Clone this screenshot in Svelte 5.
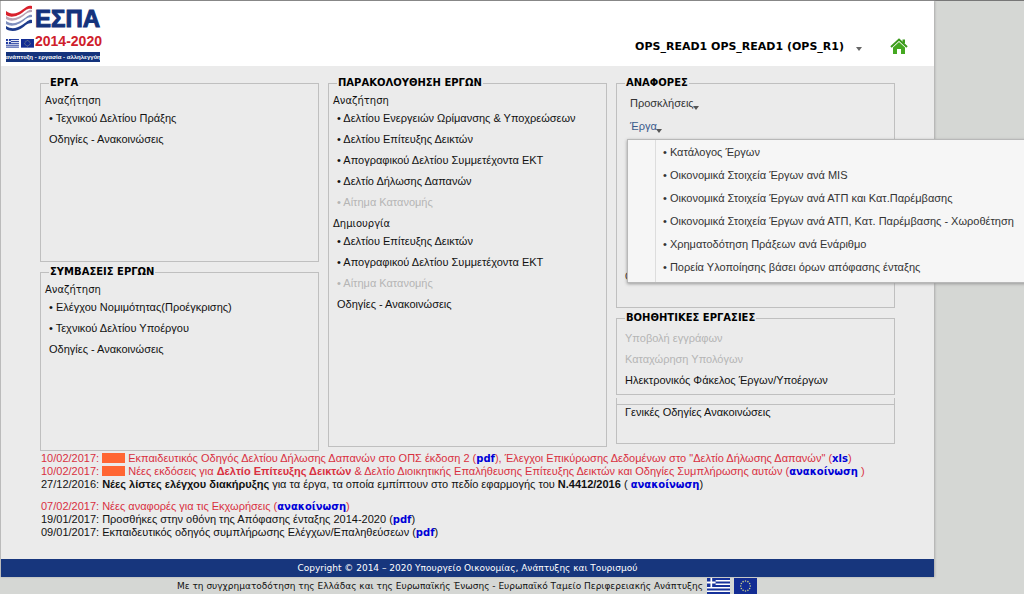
<script>
    const contracts = ["Ελέγχου Νομιμότητας(Προέγκρισης)", "Τεχνικού Δελτίου Υποέργου"];

    const searchItems = [
        { label: "Δελτίου Ενεργειών Ωρίμανσης & Υποχρεώσεων" },
        { label: "Δελτίου Επίτευξης Δεικτών" },
        { label: "Απογραφικού Δελτίου Συμμετέχοντα ΕΚΤ" },
        { label: "Δελτίο Δήλωσης Δαπανών" },
        { label: "Αίτημα Κατανομής", disabled: true }
    ];

    const createItems = [
        { label: "Δελτίου Επίτευξης Δεικτών" },
        { label: "Απογραφικού Δελτίου Συμμετέχοντα ΕΚΤ" },
        { label: "Αίτημα Κατανομής", disabled: true }
    ];

    const reports = [
        "Κατάλογος Έργων",
        "Οικονομικά Στοιχεία Έργων ανά MIS",
        "Οικονομικά Στοιχεία Έργων ανά ΑΤΠ και Κατ.Παρέμβασης",
        "Οικονομικά Στοιχεία Έργων ανά ΑΤΠ, Κατ. Παρέμβασης - Χωροθέτηση",
        "Χρηματοδότηση Πράξεων ανά Ενάριθμο",
        "Πορεία Υλοποίησης βάσει όρων απόφασης ένταξης"
    ];

    // Twelve stars on the EU flag
    const stars = Array.from({ length: 12 }, (_, i) => ({
        x: 12 + 5 * Math.sin((i * Math.PI) / 6),
        y: 8 - 5 * Math.cos((i * Math.PI) / 6)
    }));

    let reportsOpen = true;

    function toggleReports() {
        reportsOpen = !reportsOpen;
    }
</script>

{#snippet greekFlag()}
    <rect width="24" height="16" fill="#fff" />
    <path d="M0 1h24M0 4.5h24M0 8h24M0 11.5h24M0 15h24" stroke="#16329a" stroke-width="1.8" />
    <path d="M0 0h9v9H0z" fill="#16329a" />
    <path d="M4.5 0v9M0 4.5h9" stroke="#fff" stroke-width="1.8" />
{/snippet}

{#snippet euFlag()}
    <rect width="24" height="16" fill="#122c93" />
    {#each stars as star}
        <circle cx={star.x} cy={star.y} r="0.8" fill="#c9cf8a" />
    {/each}
{/snippet}

<div class="page">
    <header>
        <svg class="logo" width="96" height="58" viewBox="0 0 96 58" role="img" aria-label="ΕΣΠΑ 2014-2020">
            <path d="M0 6C6 10 11 9 16 5S23 0 26 1V4C21 3 19 6 16 8S6 14 0 10z" fill="#d9202b" />
            <path d="M0 11C6 15 11 13 16 10S23 4 26 5V7C21 7 19 10 16 12S6 18 0 14z" fill="#b9a3b4" />
            <path d="M0 16C6 20 11 18 16 15S23 9 26 10V12C21 12 19 15 16 17S6 23 0 19z" fill="#7f8fbd" />
            <path d="M0 21C6 25 11 23 16 20S23 14 26 15V18C21 18 19 21 16 23S6 28 0 24z" fill="#1d3b8b" />
            <text x="29" y="22" class="logo-name">ΕΣΠΑ</text>
            <text x="29" y="41" class="logo-years">2014-2020</text>
            <g transform="translate(0 34) scale(.54)">{@render greekFlag()}</g>
            <g transform="translate(15 34) scale(.54)">{@render euFlag()}</g>
            <rect y="47" width="94" height="10" fill="#14337c" />
            <text x="47" y="54" text-anchor="middle" class="logo-motto">ανάπτυξη - εργασία - αλληλεγγύη</text>
        </svg>
        <button class="user">
            OPS_READ1 OPS_READ1 (OPS_R1)
            <svg width="6" height="5" viewBox="0 0 6 5"><path d="M0 1h6L3 5z" fill="#666" /></svg>
        </button>
        <a class="home" href="#home" aria-label="Αρχική">
            <svg width="18" height="17" viewBox="0 0 18 17">
                <path d="M12.500 1.500h2.500v4h-2.500z" fill="#3c9a1c" />
                <path d="M3 9.500 9 4l6 5.500V16h-4v-5H7v5H3z" fill="#45a821" />
                <path d="M1 9 9 1.500 17 9" fill="none" stroke="#3c9a1c" stroke-width="2" />
            </svg>
        </a>
    </header>

    <main>
        <div class="columns">
            <div class="column">
                <fieldset class="half">
                    <legend>ΕΡΓΑ</legend>
                    <h3>Αναζήτηση</h3>
                    <a class="item" href="#deltio">• Τεχνικού Δελτίου Πράξης</a>
                    <a class="item" href="#help">Οδηγίες - Ανακοινώσεις</a>
                </fieldset>
                <fieldset class="half">
                    <legend>ΣΥΜΒΑΣΕΙΣ ΕΡΓΩΝ</legend>
                    <h3>Αναζήτηση</h3>
                    {#each contracts as label}
                        <a class="item" href="#contract">• {label}</a>
                    {/each}
                    <a class="item" href="#help">Οδηγίες - Ανακοινώσεις</a>
                </fieldset>
            </div>

            <div class="column">
                <fieldset class="tall">
                    <legend>ΠΑΡΑΚΟΛΟΥΘΗΣΗ ΕΡΓΩΝ</legend>
                    <h3>Αναζήτηση</h3>
                    {#each searchItems as item}
                        <a class="item" class:disabled={item.disabled} href="#search">• {item.label}</a>
                    {/each}
                    <h3>Δημιουργία</h3>
                    {#each createItems as item}
                        <a class="item" class:disabled={item.disabled} href="#create">• {item.label}</a>
                    {/each}
                    <a class="item" href="#help">Οδηγίες - Ανακοινώσεις</a>
                </fieldset>
            </div>

            <div class="column">
                <fieldset class="reports">
                    <legend>ΑΝΑΦΟΡΕΣ</legend>
                    <div class="report-body">
                        <button class="drop">
                            Προσκλήσεις<svg width="6" height="5" viewBox="0 0 6 5"><path d="M0 1h6L3 5z" fill="#555" /></svg>
                        </button>
                        <div class="drop-wrap">
                            <button class="drop open" on:click={toggleReports}>
                                Έργα<svg width="6" height="5" viewBox="0 0 6 5"><path d="M0 1h6L3 5z" fill="#555" /></svg>
                            </button>
                            {#if reportsOpen}
                                <div class="menu">
                                    {#each reports as report}
                                        <a href="#report">• {report}</a>
                                    {/each}
                                </div>
                            {/if}
                        </div>
                        <a class="item last" href="#help">Οδηγίες - Ανακοινώσεις</a>
                    </div>
                </fieldset>
                <fieldset class="tools">
                    <legend>ΒΟΗΘΗΤΙΚΕΣ ΕΡΓΑΣΙΕΣ</legend>
                    <a class="item disabled" href="#submit">Υποβολή εγγράφων</a>
                    <a class="item disabled" href="#register">Καταχώρηση Υπολόγων</a>
                    <a class="item" href="#folder">Ηλεκτρονικός Φάκελος Έργων/Υποέργων</a>
                </fieldset>
                <div class="general">
                    <a class="item" href="#general">Γενικές Οδηγίες Ανακοινώσεις</a>
                </div>
            </div>
        </div>

        <div class="news">
            <p class="red">10/02/2017: <span class="new"></span> Εκπαιδευτικός Οδηγός Δελτίου Δήλωσης Δαπανών στο ΟΠΣ έκδοση 2 (<a href="#pdf">pdf</a>), Έλεγχοι Επικύρωσης Δεδομένων στο "Δελτίο Δήλωσης Δαπανών" (<a href="#xls">xls</a>)</p>
            <p class="red">10/02/2017: <span class="new"></span> Νέες εκδόσεις για <b>Δελτίο Επίτευξης Δεικτών</b> & Δελτίο Διοικητικής Επαλήθευσης Επίτευξης Δεικτών και Οδηγίες Συμπλήρωσης αυτών (<a href="#ann">ανακοίνωση</a> )</p>
            <p>27/12/2016: <b>Νέες λίστες ελέγχου διακήρυξης</b> για τα έργα, τα οποία εμπίπτουν στο πεδίο εφαρμογής του <b>Ν.4412/2016</b> ( <a href="#ann">ανακοίνωση</a>)</p>
            <p class="red older">07/02/2017: Νέες αναφορές για τις Εκχωρήσεις (<a href="#ann">ανακοίνωση</a>)</p>
            <p>19/01/2017: Προσθήκες στην οθόνη της Απόφασης ένταξης 2014-2020 (<a href="#pdf">pdf</a>)</p>
            <p>09/01/2017: Εκπαιδευτικός οδηγός συμπλήρωσης Ελέγχων/Επαληθεύσεων (<a href="#pdf">pdf</a>)</p>
        </div>
    </main>

    <div class="copyright">Copyright © 2014 – 2020 Υπουργείο Οικονομίας, Ανάπτυξης και Τουρισμού</div>
</div>

<footer>
    <span>Με τη συγχρηματοδότηση της Ελλάδας και της Ευρωπαϊκής Ένωσης - Ευρωπαϊκό Ταμείο Περιφερειακής Ανάπτυξης</span>
    <svg width="23" height="16" viewBox="0 0 24 16" preserveAspectRatio="none">{@render greekFlag()}</svg>
    <svg width="23" height="16" viewBox="0 0 24 16" preserveAspectRatio="none">{@render euFlag()}</svg>
</footer>

<style>
    :global(body) {
        background: #d5d7d4;
        overflow-x: hidden;
        font: 11px/21px "Liberation Sans", Arial, sans-serif;
        color: #111;
    }

    :global(#app) {
        border-top: 1px solid #777;
    }

    .page {
        box-sizing: border-box;
        max-width: 934px;
        background: #ebebeb;
        border-left: 1px solid #bbb;
        box-shadow: 1px 0 2px #aaa;
    }

    header {
        display: flex;
        align-items: center;
        height: 65px;
        padding: 0 26px 0 5px;
        background: #fff;
    }

    .logo {
        margin-right: auto;
    }

    .logo-name {
        font: bold 24px "Liberation Sans", Arial, sans-serif;
        fill: #14337c;
        stroke: #14337c;
    }

    .logo-years {
        font: bold 14px "Liberation Sans", Arial, sans-serif;
        fill: #cf202b;
    }

    .logo-motto {
        font: bold 6px "Liberation Sans", Arial, sans-serif;
        fill: #fff;
    }

    button {
        padding: 0;
        border: 0;
        background: none;
        cursor: pointer;
    }

    .user {
        display: flex;
        align-items: center;
        gap: 12px;
        margin-top: 26px;
        font: bold 11px "DejaVu Sans", Verdana, sans-serif;
    }

    .user svg {
        margin-top: 4px;
    }

    .home {
        display: flex;
        margin: 26px 0 0 28px;
    }

    .columns {
        display: grid;
        grid-template-columns: repeat(3, 1fr);
        gap: 9px;
        padding: 10px 39px 0;
    }

    .column {
        display: flex;
        flex-direction: column;
        gap: 3px;
        min-width: 0;
    }

    fieldset {
        box-sizing: border-box;
        min-width: 0;
        margin: 0;
        padding: 0 8px;
        border: 1px solid #bfbfbf;
    }

    legend {
        padding: 0 1px;
        font: bold 10px/14px "DejaVu Sans", Verdana, sans-serif;
        color: #000;
    }

    .half {
        height: 186px;
    }

    .tall {
        height: 371px;
    }

    .reports {
        height: 232px;
    }

    .tools {
        height: 84px;
        padding-top: 3px;
    }

    /* Column sub-heading */
    h3 {
        margin: 3px 0 0 -4px;
        font: 10px/15px "DejaVu Sans", Verdana, sans-serif;
    }

    .item {
        display: block;
        color: #111;
        text-decoration: none;
        white-space: nowrap;
    }

    .disabled {
        color: #b5b5b5;
    }

    .report-body {
        display: flex;
        flex-direction: column;
        align-items: flex-start;
        box-sizing: border-box;
        height: 197px;
        padding-top: 2px;
    }

    .drop {
        display: flex;
        align-items: center;
        margin-left: 5px;
        font: inherit;
        line-height: 23px;
        color: #333;
    }

    .drop svg {
        margin: 8px 0 0 -1px;
    }

    .open {
        color: #3a5a8c;
    }

    .last {
        margin-top: auto;
    }

    .drop-wrap {
        position: relative;
    }

    .menu {
        position: absolute;
        top: 24px;
        left: 2px;
        z-index: 1;
        padding: 1px 24px 3px 35px;
        border: 1px solid #b8b8b8;
        background: linear-gradient(90deg, transparent 27px, #ddd 27px, #ddd 28px, transparent 28px) #f6f6f6;
        box-shadow: 0 1px 3px #999;
    }

    .menu a {
        display: block;
        line-height: 23px;
        color: #333;
        text-decoration: none;
        white-space: nowrap;
    }

    .general {
        box-sizing: border-box;
        height: 46px;
        padding-top: 6px;
        border: solid #bfbfbf;
        border-width: 0 1px 1px;
    }

    .general .item {
        padding: 0 8px;
        border-top: 1px solid #bfbfbf;
        line-height: 14px;
    }

    .news {
        padding: 1px 39px 20px 40px;
        line-height: 13px;
    }

    .news p {
        margin: 0;
        white-space: nowrap;
    }

    .news a {
        font: bold 10px/13px "DejaVu Sans", Verdana, sans-serif;
        color: #0000d8;
        text-decoration: none;
    }

    .news .red {
        color: #d9303f;
    }

    .news .older {
        margin-top: 9px;
    }

    .new {
        display: inline-block;
        width: 23px;
        height: 10px;
        background: #ff6633;
        vertical-align: -1px;
    }

    .copyright {
        background: #17367d;
        color: #fff;
        text-align: center;
        font: 9px/18px "DejaVu Sans", Verdana, sans-serif;
    }

    footer {
        display: flex;
        justify-content: center;
        align-items: center;
        gap: 4px;
        max-width: 934px;
        height: 17px;
        font: 9px/14px "DejaVu Sans", Verdana, sans-serif;
    }
</style>
